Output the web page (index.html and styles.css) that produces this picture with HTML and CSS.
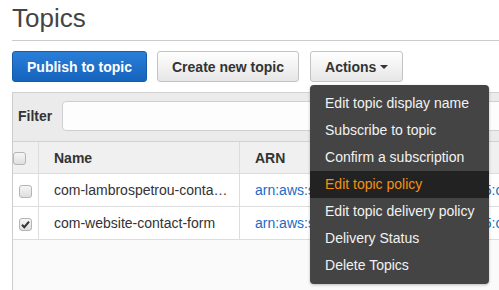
FILE: index.html
```html
<!DOCTYPE html>
<html>
<head>
<meta charset="utf-8">
<link rel="stylesheet" href="styles.css">
</head>
<body>
<div class="page">
  <h1 class="title">Topics</h1>
  <div class="toolbar">
    <button class="btn btn-primary">Publish to topic</button>
    <button class="btn">Create new topic</button>
    <div class="dropdown">
      <button class="btn">Actions<span class="caret"></span></button>
      <ul class="menu">
        <li class="menu-item">Edit topic display name</li>
        <li class="menu-item">Subscribe to topic</li>
        <li class="menu-item">Confirm a subscription</li>
        <li class="menu-item active">Edit topic policy</li>
        <li class="menu-item">Edit topic delivery policy</li>
        <li class="menu-item">Delivery Status</li>
        <li class="menu-item">Delete Topics</li>
      </ul>
    </div>
  </div>
  <div class="panel">
    <div class="filter">
      <span class="filter-label">Filter</span>
      <div class="filter-input"></div>
    </div>
    <table class="grid">
      <thead>
        <tr>
          <th class="col-check"><span class="cb"></span></th>
          <th class="col-name">Name</th>
          <th class="col-arn">ARN</th>
        </tr>
      </thead>
      <tbody>
        <tr>
          <td class="col-check"><span class="cb"></span></td>
          <td class="col-name"><div class="ellipsis">com-lambrospetrou-contact-form-topic</div></td>
          <td class="col-arn"><span class="link">arn:aws:sns:us-west-2:123456789015:com-lambrospetrou-contact-form-topic</span></td>
        </tr>
        <tr>
          <td class="col-check"><span class="cb checked"><svg viewBox="0 0 13 13" width="13" height="13"><path d="M3 6.8 L5.3 9.2 L10 3.6" fill="none" stroke="#333" stroke-width="2"/></svg></span></td>
          <td class="col-name"><div class="ellipsis">com-website-contact-form</div></td>
          <td class="col-arn"><span class="link">arn:aws:sns:us-west-2:123456789015:com-website-contact-form</span></td>
        </tr>
      </tbody>
    </table>
    <div class="empty"></div>
  </div>
</div>
</body>
</html>
```

FILE: styles.css
```css
html, body {
  margin: 0;
  padding: 0;
  background: #ffffff;
  overflow: hidden;
}

body {
  font-family: "Liberation Sans", Arial, sans-serif;
  color: #333333;
  width: 499px;
  height: 290px;
}

.page {
  padding-left: 12px;
  width: 800px;
}

.title {
  margin: 0;
  padding: 3px 0 7px;
  font-size: 26px;
  line-height: 30px;
  font-weight: normal;
  color: #444444;
  border-bottom: 1px solid #cccccc;
}

.toolbar {
  display: flex;
  gap: 10px;
  margin-top: 10px;
  align-items: flex-start;
}

.btn {
  font-family: "Liberation Sans", Arial, sans-serif;
  font-size: 14px;
  font-weight: bold;
  height: 31px;
  padding: 0 14px;
  border: 1px solid #c4c4c4;
  border-radius: 3px;
  background: linear-gradient(#ffffff, #e6e6e6);
  color: #333333;
  display: flex;
  align-items: center;
  margin: 0;
}

.btn-primary {
  background: linear-gradient(#2a7fd9, #1563bd);
  border-color: #175aa8;
  color: #ffffff;
}

.caret {
  display: inline-block;
  width: 0;
  height: 0;
  margin-left: 4px;
  border-left: 4px solid transparent;
  border-right: 4px solid transparent;
  border-top: 4px solid #333333;
}

.dropdown {
  position: relative;
  margin-left: 1px;
}

.menu {
  position: absolute;
  z-index: 10;
  left: 0;
  top: 34px;
  width: 179px;
  margin: 0;
  padding: 5px 0;
  list-style: none;
  background: #444444;
  border-radius: 4px;
  box-shadow: 0 1px 3px rgba(0, 0, 0, 0.25);
}

.menu-item {
  height: 27px;
  line-height: 27px;
  padding-left: 15px;
  font-size: 14px;
  color: #f2f2f2;
  white-space: nowrap;
}

.menu-item.active {
  background: #222222;
  color: #f29111;
}

.panel {
  margin-top: 10px;
  border-left: 1px solid #cccccc;
  border-top: 1px solid #d2d2d2;
  background: #fafafa;
}

.filter {
  display: flex;
  align-items: center;
  padding: 8px 0 10px 5px;
  background: #ebebeb;
}

.filter-label {
  font-size: 14px;
  font-weight: bold;
  color: #333333;
  margin-right: 10px;
}

.filter-input {
  height: 28px;
  width: 700px;
  background: #fdfdfd;
  border: 1px solid #cfcfcf;
  border-radius: 4px;
}

.grid {
  border-collapse: collapse;
  table-layout: fixed;
  width: 700px;
  font-size: 14px;
  background: #ffffff;
}

.grid th {
  background: #f0f0f0;
  font-weight: bold;
  text-align: left;
  height: 31px;
  border-top: 1px solid #d2d2d2;
  border-bottom: 1px solid #dddddd;
  color: #333333;
}

.grid td {
  height: 32px;
  border-bottom: 1px solid #dddddd;
  white-space: nowrap;
}

.grid th, .grid td {
  padding: 0;
  vertical-align: middle;
}

.grid th + th, .grid td + td {
  border-left: 1px solid #dddddd;
}

.col-check {
  width: 25px;
  text-align: center;
}

.col-name {
  width: 177px;
  padding-left: 15px !important;
  padding-right: 8px !important;
}

.col-arn {
  width: 480px;
  padding-left: 15px !important;
  overflow: hidden;
}

.ellipsis {
  overflow: hidden;
  text-overflow: ellipsis;
  white-space: nowrap;
}

.link {
  color: #1a6bc4;
}

.cb {
  display: inline-block;
  width: 11px;
  height: 11px;
  border: 1px solid #b5b5b5;
  border-radius: 3px;
  background: linear-gradient(#f6f6f6, #dedede);
  vertical-align: middle;
  position: relative;
}

.cb svg {
  position: absolute;
  left: -1px;
  top: -1px;
}

.empty {
  height: 80px;
  background: #fafafa;
}
```
